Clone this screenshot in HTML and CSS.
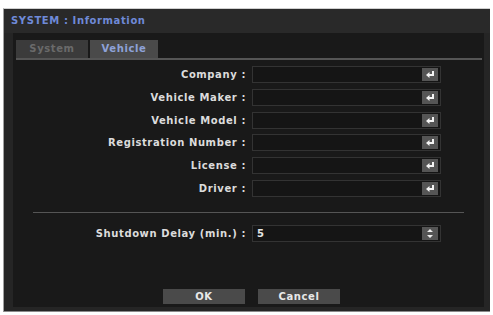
FILE: index.html
```html
<!DOCTYPE html>
<html lang="en">
<head>
    <meta charset="UTF-8">
    <title>SYSTEM : Information</title>
    <link rel="stylesheet" href="styles.css">
</head>
<body>
    <div class="window">
        <div class="titlebar">SYSTEM : Information</div>
        <div class="panel">
            <div class="tabs">
                <div class="tab">System</div>
                <div class="tab active">Vehicle</div>
            </div>

            <div class="form">
                <div class="row">
                    <div class="label">Company :</div>
                    <div class="field"><span class="value"></span><span class="btn"><svg class="enter" viewBox="0 0 10 9"><path d="M8 1V5H4" fill="none" stroke="#f4f4f4" stroke-width="2"/><path d="M1 5L4.5 2V8Z" fill="#f4f4f4"/></svg></span></div>
                </div>
                <div class="row">
                    <div class="label">Vehicle Maker :</div>
                    <div class="field"><span class="value"></span><span class="btn"><svg class="enter" viewBox="0 0 10 9"><path d="M8 1V5H4" fill="none" stroke="#f4f4f4" stroke-width="2"/><path d="M1 5L4.5 2V8Z" fill="#f4f4f4"/></svg></span></div>
                </div>
                <div class="row">
                    <div class="label">Vehicle Model :</div>
                    <div class="field"><span class="value"></span><span class="btn"><svg class="enter" viewBox="0 0 10 9"><path d="M8 1V5H4" fill="none" stroke="#f4f4f4" stroke-width="2"/><path d="M1 5L4.5 2V8Z" fill="#f4f4f4"/></svg></span></div>
                </div>
                <div class="row">
                    <div class="label">Registration Number :</div>
                    <div class="field"><span class="value"></span><span class="btn"><svg class="enter" viewBox="0 0 10 9"><path d="M8 1V5H4" fill="none" stroke="#f4f4f4" stroke-width="2"/><path d="M1 5L4.5 2V8Z" fill="#f4f4f4"/></svg></span></div>
                </div>
                <div class="row">
                    <div class="label">License :</div>
                    <div class="field"><span class="value"></span><span class="btn"><svg class="enter" viewBox="0 0 10 9"><path d="M8 1V5H4" fill="none" stroke="#f4f4f4" stroke-width="2"/><path d="M1 5L4.5 2V8Z" fill="#f4f4f4"/></svg></span></div>
                </div>
                <div class="row">
                    <div class="label">Driver :</div>
                    <div class="field"><span class="value"></span><span class="btn"><svg class="enter" viewBox="0 0 10 9"><path d="M8 1V5H4" fill="none" stroke="#f4f4f4" stroke-width="2"/><path d="M1 5L4.5 2V8Z" fill="#f4f4f4"/></svg></span></div>
                </div>
            </div>

            <div class="separator"></div>

            <div class="row">
                <div class="label">Shutdown Delay (min.) :</div>
                <div class="field">
                    <span class="value">5</span>
                    <span class="btn">
                        <svg width="6" height="9" viewBox="0 0 6 9"><path d="M3 0L6 3H0Z M3 9L6 6H0Z" fill="#eee"/></svg>
                    </span>
                </div>
            </div>

            <div class="actions">
                <div class="button">OK</div>
                <div class="button">Cancel</div>
            </div>
        </div>
    </div>
</body>
</html>
```

FILE: styles.css
```css
body {
    margin: 0;
    background: #fff;
    font-family: "DejaVu Sans", Verdana, sans-serif;
    font-weight: bold;
    font-size: 10px;
    letter-spacing: 0.6px;
}
.window {
    margin: 8px 3px 0 3px;
    height: 304px;
    box-sizing: border-box;
    background: #252525;
    border-left: 1px solid #a0a0a0;
    border-bottom: 1px solid #8a8a8a;
    border-top: 1px solid #d0d0d0;
    display: flex;
    flex-direction: column;
}
.titlebar {
    height: 24px;
    line-height: 23px;
    padding-left: 7px;
    color: #6f8ad8;
    background: #292929;
}
.panel {
    flex: 1;
    margin: 0 6px 4px 9px;
    background: #191919;
    display: flex;
    flex-direction: column;
    padding: 7px 2px 3px 3px;
}
.tabs {
    display: flex;
    gap: 2px;
    border-bottom: 2px solid #555;
}
.tab {
    width: 72px;
    height: 18px;
    line-height: 18px;
    text-align: center;
    background: #3b3b3b;
    color: #6a6a6a;
}
.tab.active {
    width: 68px;
    background: #4a4a4a;
    color: #8ea2d8;
}
.form {
    display: flex;
    flex-direction: column;
    gap: 5.8px;
    margin-top: 6px;
}
.row {
    display: flex;
    align-items: center;
    gap: 6px;
    height: 17px;
}
.label {
    width: 230px;
    text-align: right;
    color: #dcdcdc;
    white-space: nowrap;
}
.field {
    width: 189px;
    height: 17px;
    box-sizing: border-box;
    border: 1px solid #333;
    background: #151515;
    display: flex;
    align-items: center;
    justify-content: space-between;
    padding: 0 2px 0 4px;
    color: #e6e6e6;
}
.btn {
    width: 16px;
    height: 13px;
    background: #555;
    display: flex;
    align-items: center;
    justify-content: center;
}
.enter {
    width: 10px;
    height: 9px;
}
.separator {
    height: 1px;
    background: #555;
    margin: 15px 18px 12px 17px;
}
.actions {
    margin-top: auto;
    display: flex;
    justify-content: center;
    gap: 13px;
    padding-left: 5px;
}
.button {
    width: 82px;
    height: 15px;
    line-height: 15px;
    text-align: center;
    background: #4a4a4a;
    color: #e8e8e8;
}
```
